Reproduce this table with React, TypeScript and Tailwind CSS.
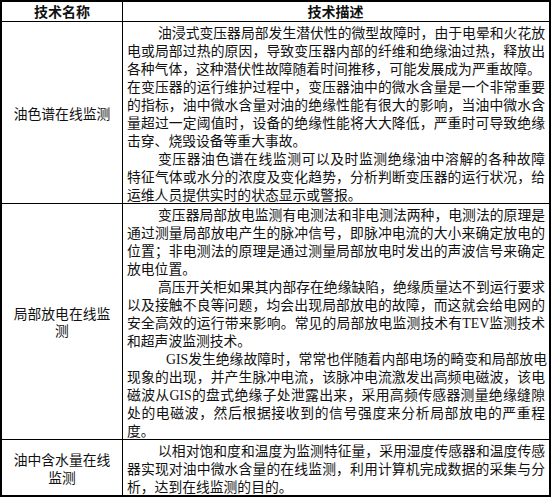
import React from "react";

type Ln = { t: string; i?: number; end?: boolean };

const row1: Ln[] = [
  { t: "油浸式变压器局部发生潜伏性的微型故障时，由于电晕和火花放", i: 1 },
  { t: "电或局部过热的原因，导致变压器内部的纤维和绝缘油过热，释放出" },
  { t: "各种气体，这种潜伏性故障随着时间推移，可能发展成为严重故障。", end: true },
  { t: "在变压器的运行维护过程中，变压器油中的微水含量是一个非常重要" },
  { t: "的指标，油中微水含量对油的绝缘性能有很大的影响，当油中微水含" },
  { t: "量超过一定阈值时，设备的绝缘性能将大大降低，严重时可导致绝缘" },
  { t: "击穿、烧毁设备等重大事故。", end: true },
  { t: "变压器油色谱在线监测可以及时监测绝缘油中溶解的各种故障", i: 1 },
  { t: "特征气体或水分的浓度及变化趋势，分析判断变压器的运行状况，给" },
  { t: "运维人员提供实时的状态显示或警报。", end: true },
];

const row2: Ln[] = [
  { t: "变压器局部放电监测有电测法和非电测法两种，电测法的原理是", i: 1 },
  { t: "通过测量局部放电产生的脉冲信号，即脉冲电流的大小来确定放电的" },
  { t: "位置；非电测法的原理是通过测量局部放电时发出的声波信号来确定" },
  { t: "放电位置。", end: true },
  { t: "高压开关柜如果其内部存在绝缘缺陷，绝缘质量达不到运行要求", i: 1 },
  { t: "以及接触不良等问题，均会出现局部放电的故障，而这就会给电网的" },
  { t: "安全高效的运行带来影响。常见的局部放电监测技术有TEV监测技术" },
  { t: "和超声波监测技术。", end: true },
  { t: "GIS发生绝缘故障时，常常也伴随着内部电场的畸变和局部放电", i: 2 },
  { t: "现象的出现，并产生脉冲电流，该脉冲电流激发出高频电磁波，该电" },
  { t: "磁波从GIS的盘式绝缘子处泄露出来，采用高频传感器测量绝缘缝隙" },
  { t: "处的电磁波，然后根据接收到的信号强度来分析局部放电的严重程" },
  { t: "度。", end: true },
];

const row3: Ln[] = [
  { t: "以相对饱和度和温度为监测特征量，采用湿度传感器和温度传感", i: 1 },
  { t: "器实现对油中微水含量的在线监测，利用计算机完成数据的采集与分" },
  { t: "析，达到在线监测的目的。", end: true },
];

function renderText(t: string) {
  return t.split(/(GIS|TEV)/).map((part, k) =>
    part === "GIS" || part === "TEV" ? (
      <span key={k} className="font-['Liberation_Serif',serif]">
        {part}
      </span>
    ) : (
      <React.Fragment key={k}>{part}</React.Fragment>
    )
  );
}

function Line({ l }: { l: Ln }) {
  const indent = l.i === 1 ? "pl-[31px]" : l.i === 2 ? "pl-[39px]" : "";
  const align = l.end ? "text-left" : "text-justify [text-align-last:justify]";
  return <div className={`whitespace-nowrap h-[18px] ${indent} ${align}`}>{renderText(l.t)}</div>;
}

function Desc({ lines }: { lines: Ln[] }) {
  return (
    <div className="w-[425px] pl-[4px] pr-[3px] pt-[1px]">
      {lines.map((l, k) => (
        <Line key={k} l={l} />
      ))}
    </div>
  );
}

export default function App() {
  return (
    <div className="w-[554px] h-[498px] bg-white text-[#111] font-['Noto_Sans_CJK_SC',sans-serif] text-[13.8px] leading-[18px]">
      <div className="w-[551px] border-2 border-black flex flex-col">
        <div className="flex h-[20px] border-b border-black font-bold text-[14px] leading-[19px]">
          <div className="w-[121px] border-r border-black text-center">技术名称</div>
          <div className="w-[425px] text-center">技术描述</div>
        </div>
        <div className="flex border-b border-black">
          <div className="w-[121px] border-r border-black flex items-center justify-center text-center">
            油色谱在线监测
          </div>
          <Desc lines={row1} />
        </div>
        <div className="flex border-b border-black">
          <div className="w-[121px] border-r border-black flex items-center justify-center text-center leading-[17px]">
            局部放电在线监
            <br />
            测
          </div>
          <Desc lines={row2} />
        </div>
        <div className="flex">
          <div className="w-[121px] border-r border-black flex items-center justify-center text-center">
            油中含水量在线
            <br />
            监测
          </div>
          <Desc lines={row3} />
        </div>
      </div>
    </div>
  );
}
